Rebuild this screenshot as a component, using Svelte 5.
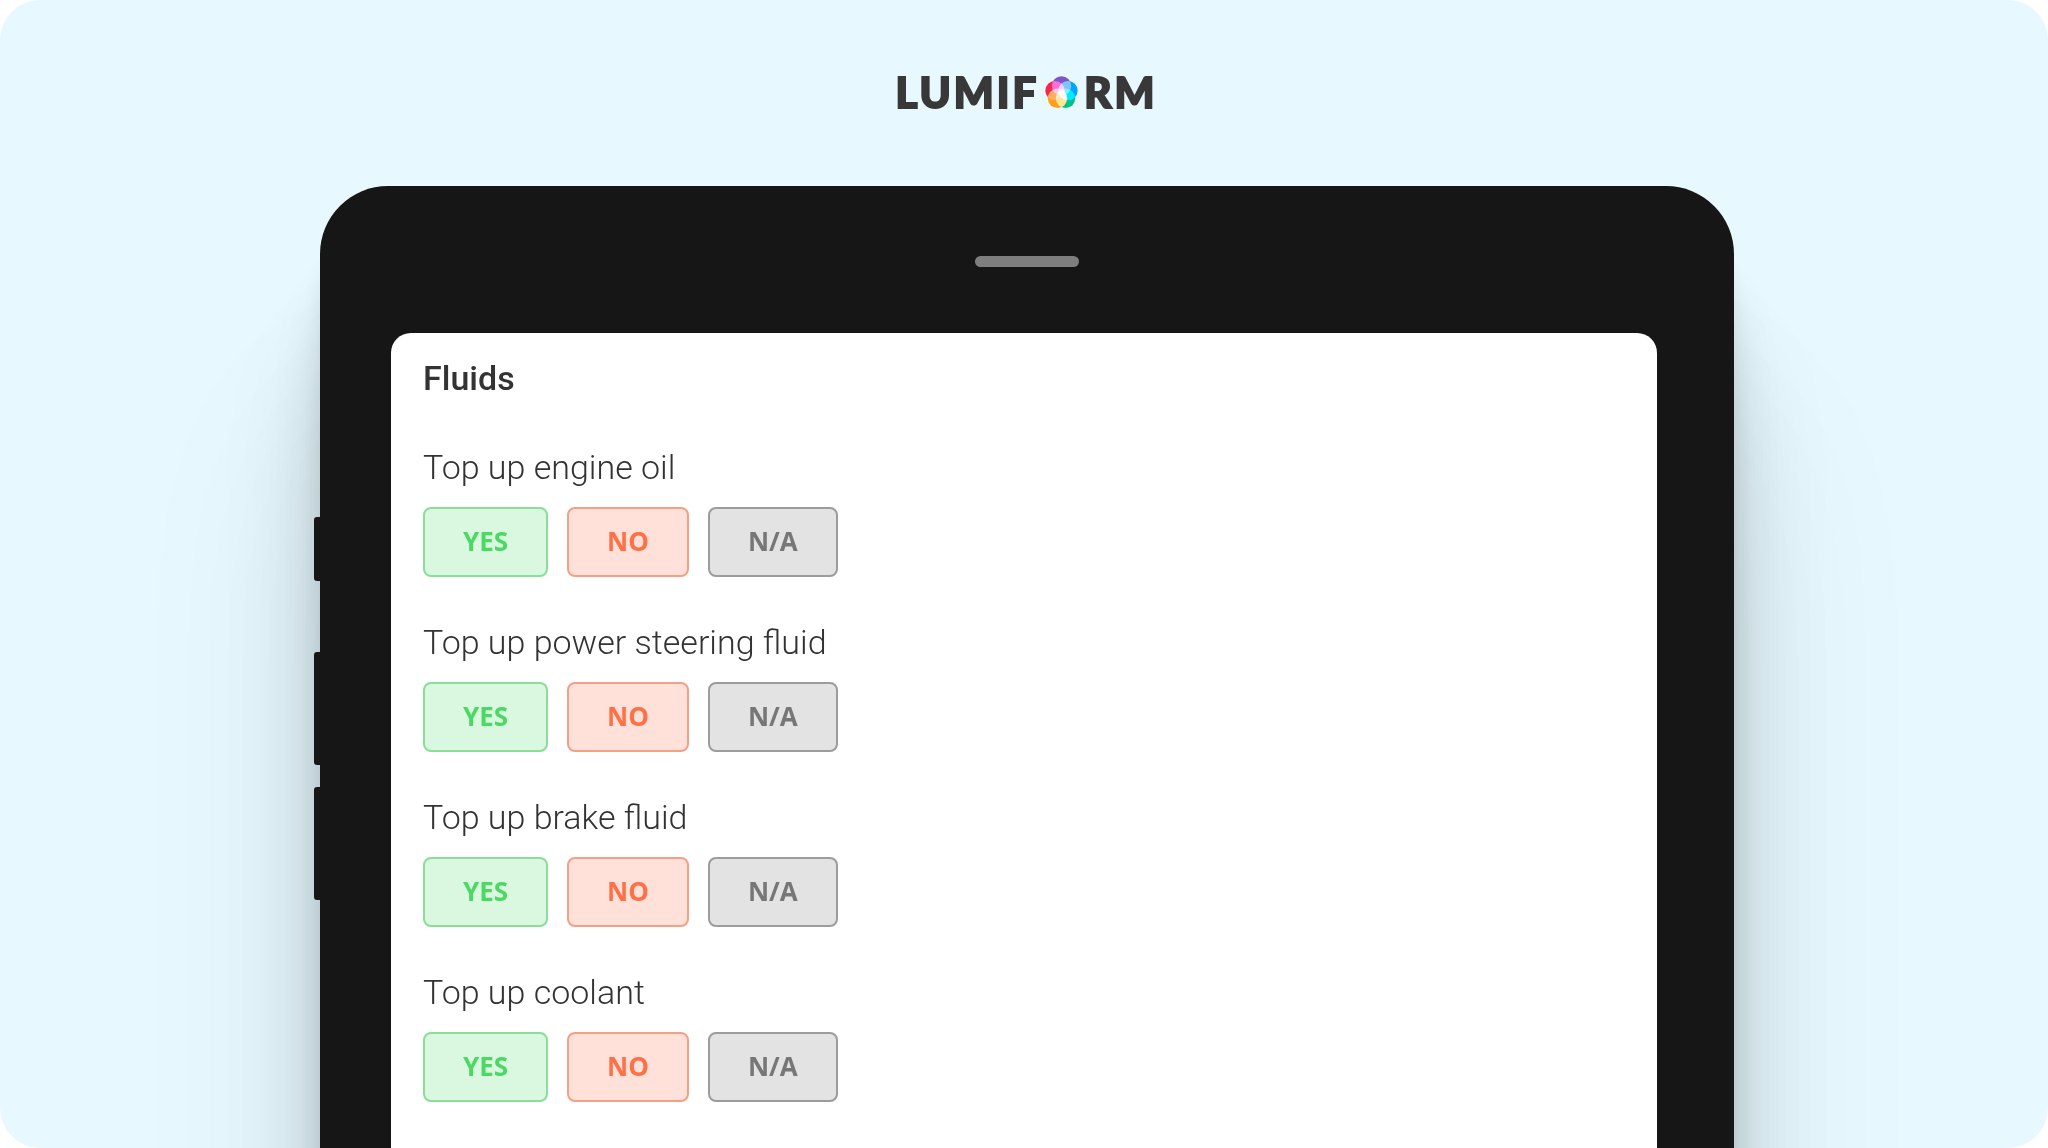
<script>
  const section = 'Fluids';

  const questions = [
    { id: 'engine-oil', label: 'Top up engine oil' },
    { id: 'steering-fluid', label: 'Top up power steering fluid' },
    { id: 'brake-fluid', label: 'Top up brake fluid' },
    { id: 'coolant', label: 'Top up coolant' }
  ];

  const options = [
    { value: 'yes', label: 'YES' },
    { value: 'no', label: 'NO' },
    { value: 'na', label: 'N/A' }
  ];

  let answers = $state({});
</script>

<main class="stage">
  <header class="logo">
    <span>LUMIF</span>
    <svg class="bloom" viewBox="0 0 32 32" aria-hidden="true">
      <g>
        <circle cx="16" cy="9.6" r="9.4" fill="#7d55c7" />
        <circle cx="22.3" cy="14.2" r="9.4" fill="#00a6fb" />
        <circle cx="19.9" cy="21.6" r="9.4" fill="#00c389" />
        <circle cx="12.1" cy="21.6" r="9.4" fill="#ff9e1b" />
        <circle cx="9.7" cy="14.2" r="9.4" fill="#f5274e" />
      </g>
    </svg>
    <span>RM</span>
  </header>

  <div class="tablet">
    <div class="keys">
      <div class="key short"></div>
      <div class="key"></div>
      <div class="key"></div>
    </div>

    <div class="device">
      <div class="speaker"></div>

      <section class="screen">
        <h1>{section}</h1>

        {#each questions as question (question.id)}
          <div class="question" role="group" aria-labelledby={question.id}>
            <p id={question.id}>{question.label}</p>
            <div class="options">
              {#each options as option (option.value)}
                <button
                  type="button"
                  class={option.value}
                  aria-pressed={answers[question.id] === option.value}
                  onclick={() => (answers[question.id] = option.value)}
                >
                  {option.label}
                </button>
              {/each}
            </div>
          </div>
        {/each}
      </section>
    </div>
  </div>
</main>

<style>
  :global(body) {
    background: #fff;
  }

  .stage {
    box-sizing: border-box;
    display: flex;
    flex-direction: column;
    height: 100vh;
    overflow: hidden;
    border-radius: 40px;
    background: #e7f9ff;
    color: #333;
    font-family: Roboto, "Liberation Sans", sans-serif;
  }

  .logo {
    display: flex;
    justify-content: center;
    align-items: center;
    flex-shrink: 0;
    box-sizing: border-box;
    height: 186px;
    padding: 0 0 2px 5px;
    color: #383838;
    font-family: Lato, "Liberation Sans", sans-serif;
    font-size: 42px;
    font-weight: 900;
    letter-spacing: 3px;
    -webkit-text-stroke: 2px #383838;
  }

  .bloom {
    width: 33px;
    height: 33px;
    margin: 0 6px;
  }

  .bloom g {
    isolation: isolate;
  }

  .bloom circle {
    mix-blend-mode: screen;
  }

  /* The tablet runs past the bottom edge of the stage */
  .tablet {
    display: flex;
    flex: 1 0 auto;
    width: 100%;
    max-width: 1420px;
    margin: 0 auto -300px;
  }

  .keys {
    position: relative;
    z-index: 1;
    display: flex;
    flex-direction: column;
    gap: 22px;
    width: 6px;
    padding-top: 331px;
  }

  .key {
    height: 113px;
    border-radius: 3px 0 0 3px;
    background: #161616;
  }

  .key.short {
    height: 64px;
    margin-bottom: 49px;
  }

  .device {
    box-sizing: border-box;
    display: flex;
    flex: 1;
    flex-direction: column;
    padding-top: 70px;
    border-radius: 68px 68px 0 0;
    background: #161616;
    box-shadow:
      0 240px 200px rgba(0, 0, 0, 0.09),
      0 160px 100px rgba(0, 0, 0, 0.13),
      0 90px 50px rgba(0, 0, 0, 0.1),
      0 50px 20px rgba(0, 0, 0, 0.06);
  }

  .speaker {
    align-self: center;
    flex-shrink: 0;
    width: 104px;
    height: 11px;
    margin-bottom: 66px;
    border-radius: 6px;
    background: #7e7e7e;
  }

  .screen {
    flex: 1;
    margin: 0 77px 0 71px;
    padding: 24px 32px;
    border-radius: 20px 20px 0 0;
    background: #fff;
  }

  h1 {
    margin: 0 0 45px;
    font-size: 34px;
    font-weight: 500;
    line-height: 42px;
  }

  .question {
    margin-bottom: 42px;
  }

  p {
    margin: 0 0 17px;
    font-size: 34px;
    font-weight: 300;
    line-height: 46px;
  }

  .options {
    display: flex;
    gap: 19px;
  }

  button {
    height: 70px;
    padding: 0 38px 2px;
    border: 2px solid;
    border-radius: 8px;
    font-family: "Open Sans", "Liberation Sans", sans-serif;
    font-size: 26px;
    font-weight: 700;
    cursor: pointer;
  }

  .yes {
    border-color: #8ade99;
    background: #daf7df;
    color: #4bd964;
  }

  .no {
    border-color: #f69f87;
    background: #ffe1d9;
    color: #ff7046;
  }

  .na {
    border-color: #9c9c9c;
    background: #e3e3e3;
    color: #777;
  }
</style>
